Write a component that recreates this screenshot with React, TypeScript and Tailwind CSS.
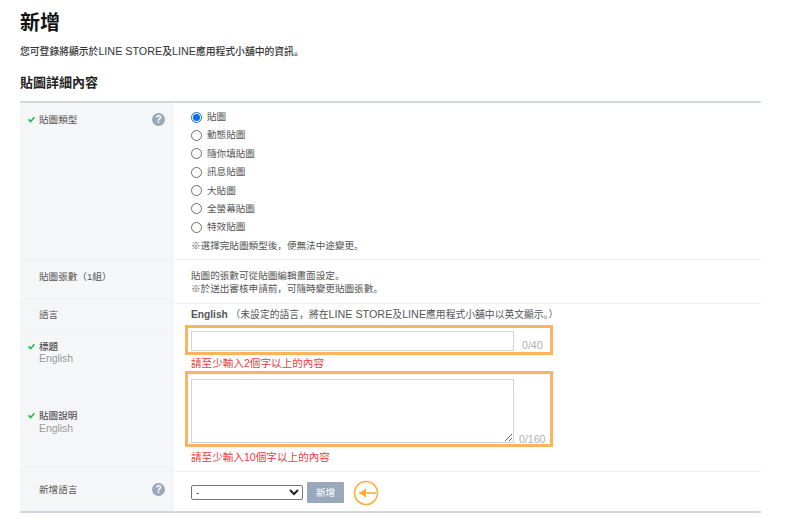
const font = "[font-family:'Liberation_Sans','Noto_Sans_CJK_SC',sans-serif]";

const stickerTypes = ['貼圖', '動態貼圖', '隨你填貼圖', '訊息貼圖', '大貼圖', '全螢幕貼圖', '特效貼圖'];

function Check() {
  return (
    <svg className="absolute left-[8px] top-[2px]" width="7" height="7" viewBox="0 0 7 7" fill="none">
      <path d="M0.6 3.4 L2.7 5.6 L6.4 1.2" stroke="#22b84c" strokeWidth="1.6" />
    </svg>
  );
}

function Help() {
  return (
    <span className="-mt-[1px] flex h-[13px] w-[13px] items-center justify-center rounded-full bg-[#9aa8bc] text-[10px] font-bold leading-none text-white">
      ?
    </span>
  );
}

function Radio({ checked }: { checked?: boolean }) {
  return checked ? (
    <span className="flex h-[11px] w-[11px] items-center justify-center rounded-full border border-[#0a6fe8] bg-white">
      <span className="h-[7px] w-[7px] rounded-full bg-[#0a6fe8]" />
    </span>
  ) : (
    <span className="h-[11px] w-[11px] rounded-full border border-[#6f6f6f] bg-white" />
  );
}

function Latin({ children }: { children: string }) {
  return <span className="text-[1.1em] leading-none">{children}</span>;
}

export default function App() {
  return (
    <div className={`${font} h-[530px] w-[807px] overflow-hidden bg-white px-[20px] pt-[12px] text-[#333]`}>
      <h1 className="text-[20px] font-bold leading-[22px] text-[#111]">新增</h1>
      <p className="mt-[12px] text-[9.8px] font-medium leading-[12px] text-[#333]">
        您可登錄將顯示於<Latin>LINE STORE</Latin>及<Latin>LINE</Latin>應用程式小舖中的資訊。
      </p>
      <h2 className="mt-[17px] text-[13px] font-bold leading-[16px] text-[#222]">貼圖詳細內容</h2>

      <div className="mt-[10px] w-[741px] border-b-2 border-t-2 border-b-[#d3d8df] border-t-[#d3d8df] text-[9.6px] leading-[12px]">
        {/* 貼圖類型 */}
        <div className="flex h-[157px] border-b border-[#f1f2f4]">
          <div className="relative flex w-[154px] justify-between bg-[#f5f6f8] pl-[19px] pr-[9px] pt-[11px]">
            <div className="relative -ml-[19px] pl-[19px] text-[#555]">
              <Check />
              貼圖類型
            </div>
            <Help />
          </div>
          <div className="flex-1 pl-[17px] pt-[8px] text-[#555]">
            <div className="flex flex-col gap-[6.4px]">
              {stickerTypes.map((t, i) => (
                <label key={t} className="flex h-[12px] items-center gap-[5px]">
                  <Radio checked={i === 0} />
                  {t}
                </label>
              ))}
            </div>
            <p className="mt-[7px]">※選擇完貼圖類型後，便無法中途變更。</p>
          </div>
        </div>

        {/* 貼圖張數 */}
        <div className="flex h-[44px] border-b border-[#f1f2f4]">
          <div className="flex w-[154px] bg-[#f5f6f8] pl-[19px] pt-[11px] text-[#555]">貼圖張數（1組）</div>
          <div className="flex-1 pl-[17px] pt-[10px] leading-[12.5px] text-[#555]">
            <p>貼圖的張數可從貼圖編輯畫面設定。</p>
            <p>※於送出審核申請前，可隨時變更貼圖張數。</p>
          </div>
        </div>

        {/* 語言 */}
        <div className="flex h-[26px]">
          <div className="w-[154px] border-b border-[#f1f2f4] bg-[#f5f6f8] pl-[19px] pt-[5px] text-[#555]">語言</div>
          <div className="flex-1 pl-[17px] pt-[5px] text-[9.8px] text-[#555]">
            <span className="text-[10.2px] font-bold">English</span> （未設定的語言，將在<Latin>LINE STORE</Latin>及<Latin>LINE</Latin>應用程式小舖中以英文顯示。）
          </div>
        </div>

        {/* 標題 */}
        <div className="flex h-[42px]">
          <div className="w-[154px] bg-[#f5f6f8] pl-[19px] pt-[11px]">
            <div className="relative -ml-[19px] pl-[19px] font-medium text-[#555]">
              <Check />
              標題
            </div>
            <div className="text-[10.4px] text-[#999]">English</div>
          </div>
          <div className="relative flex-1 pl-[17px] pt-[1px]">
            <div className="flex items-end">
              <input className="h-[20px] w-[323px] border border-[#d5d5d5] bg-white" />
              <span className="ml-[8px] text-[10.6px] leading-[12px] text-[#b0b0b0]">0/40</span>
            </div>
            <p className="mt-[6px] text-[10.6px] text-[#f03c3c]">請至少輸入2個字以上的內容</p>
            <div className="pointer-events-none absolute left-[11px] top-[-5px] h-[30px] w-[368px] border-[3px] border-[#fdb45c]" />
          </div>
        </div>

        {/* 貼圖說明 */}
        <div className="flex h-[100px] border-b border-[#f1f2f4]">
          <div className="w-[154px] bg-[#f5f6f8] pl-[19px] pt-[38px]">
            <div className="relative -ml-[19px] pl-[19px] font-medium text-[#555]">
              <Check />
              貼圖說明
            </div>
            <div className="mt-[1px] text-[10.4px] text-[#999]">English</div>
          </div>
          <div className="relative flex-1 pl-[17px] pt-[7px]">
            <div className="flex items-end">
              <textarea className="block h-[64px] w-[323px] border border-[#d5d5d5] bg-white" />
              <span className="mb-[-2px] ml-[5px] text-[10.6px] leading-[12px] text-[#b0b0b0]">0/160</span>
            </div>
            <p className="mt-[8px] text-[10.6px] text-[#f03c3c]">請至少輸入10個字以上的內容</p>
            <div className="pointer-events-none absolute left-[11px] top-[-1px] h-[76px] w-[368px] border-[3px] border-[#fdb45c]" />
          </div>
        </div>

        {/* 新增語言 */}
        <div className="flex h-[39px]">
          <div className="flex w-[154px] justify-between bg-[#f5f6f8] pl-[19px] pr-[9px] pt-[12px] text-[#555]">
            新增語言
            <Help />
          </div>
          <div className="flex flex-1 items-center pl-[17px] pt-[2px]">
            <select className="h-[15px] w-[112px] rounded-[2px] border border-[#767676] bg-white text-[9px] leading-none text-[#222]">
              <option>-</option>
            </select>
            <button className="ml-[4px] h-[21px] w-[37px] rounded-[1px] bg-[#9aa8bc] text-[9.6px] text-white">新增</button>
            <svg className="ml-[9px]" width="26" height="26" viewBox="0 0 26 26" fill="none">
              <circle cx="13" cy="13" r="11.5" stroke="#fdae3c" strokeWidth="1.6" />
              <path d="M6 13 H23" stroke="#fdae3c" strokeWidth="1.6" />
              <path d="M6 13 L13 8.5 V17.5 Z" fill="#fdae3c" />
            </svg>
          </div>
        </div>
      </div>
    </div>
  );
}
